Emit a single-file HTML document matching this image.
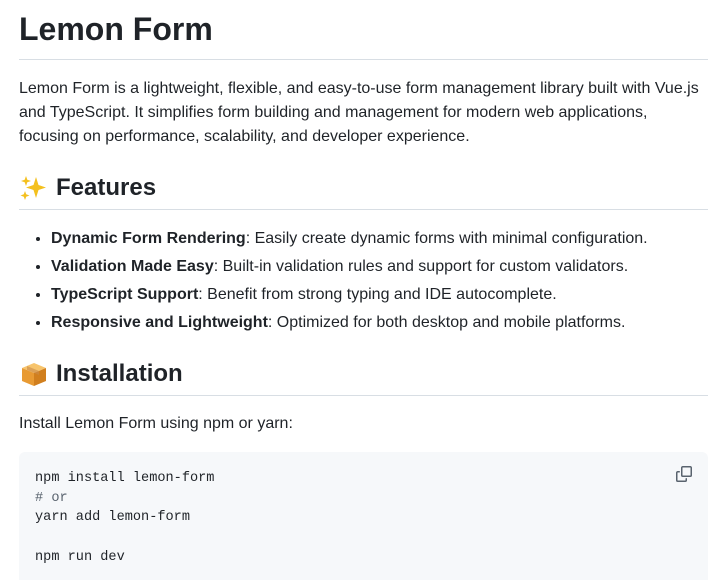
<!DOCTYPE html>
<html><head><meta charset="utf-8"><style>
body{margin:0;background:#fff;color:#1f2328;font-family:"Liberation Sans",sans-serif;font-size:16px;line-height:24px;}
.w{position:absolute;left:19px;width:689px;top:0}
h1{position:absolute;top:8px;left:0;width:689px;margin:0;font-size:32px;line-height:42px;font-weight:600;border-bottom:1px solid #d8dee4;height:51px}
p{margin:0;position:absolute;left:0;width:689px}
h2{position:absolute;left:0;width:689px;margin:0;font-size:24px;line-height:30px;font-weight:600;border-bottom:1px solid #d8dee4;display:flex;align-items:flex-start}
h2 svg{margin-right:7px;margin-top:1px}
ul{position:absolute;left:0;top:227px;margin:0;padding-left:32px;width:657px}
li{line-height:24px;margin-bottom:4px}
b{font-weight:600}
pre{position:absolute;left:0;top:452px;height:128px;margin:0;background:#f6f8fa;padding:17px 16px 16px;box-sizing:border-box;width:689px;font-family:"Liberation Mono",monospace;font-size:13.6px;line-height:19.7px;border-radius:6px 6px 0 0}
.c{color:#59636e}
</style></head><body><div class="w">
<h1>Lemon Form</h1>
<p style="top:77px">Lemon Form is a lightweight, flexible, and easy-to-use form management library built with Vue.js and TypeScript. It simplifies form building and management for modern web applications, focusing on performance, scalability, and developer experience.</p>
<h2 style="top:173px;height:36px"><svg width="30" height="28" viewBox="0 0 30 28"><path d="M17 3 L19.5 11 L27 13.5 L19.5 16 L17 24 L14.5 16 L7 13.5 L14.5 11Z" fill="#f4c01e"/><path d="M7 2 L8.3 5.7 L12 7 L8.3 8.3 L7 12 L5.7 8.3 L2 7 L5.7 5.7Z" fill="#f4c01e"/><path d="M6 17 L7.2 20.3 L10.5 21.5 L7.2 22.7 L6 26 L4.8 22.7 L1.5 21.5 L4.8 20.3Z" fill="#f4c01e"/></svg>Features</h2>
<ul>
<li><b>Dynamic Form Rendering</b>: Easily create dynamic forms with minimal configuration.</li>
<li><b>Validation Made Easy</b>: Built-in validation rules and support for custom validators.</li>
<li><b>TypeScript Support</b>: Benefit from strong typing and IDE autocomplete.</li>
<li><b>Responsive and Lightweight</b>: Optimized for both desktop and mobile platforms.</li>
</ul>
<h2 style="top:359px;height:36px"><svg width="30" height="28" viewBox="0 0 30 28"><path d="M3 8 L15 3 L27 8 L15 13Z" fill="#f7c46c"/><path d="M3 8 L15 13 L15 26 L3 21Z" fill="#e89a33"/><path d="M27 8 L15 13 L15 26 L27 21Z" fill="#d17f1e"/><path d="M8 6 L20 11 L20 15 L8 10Z" fill="#c98a4a" opacity=".6"/></svg>Installation</h2>
<p style="top:412px">Install Lemon Form using npm or yarn:</p>
<pre>npm install lemon-form
<span class="c"># or</span>
yarn add lemon-form

npm run dev</pre>
<svg style="position:absolute;left:657px;top:466px" width="16" height="16" viewBox="0 0 16 16" fill="#59636e"><path d="M0 6.75C0 5.784.784 5 1.750 5h1.5a.75.75 0 0 1 0 1.5h-1.5a.25.25 0 0 0-.25.25v7.5c0 .138.112.25.25.25h7.5a.25.25 0 0 0 .25-.25v-1.5a.75.75 0 0 1 1.5 0v1.5A1.75 1.75 0 0 1 9.25 16h-7.5A1.75 1.75 0 0 1 0 14.25Z"/><path d="M5 1.75C5 .784 5.784 0 6.75 0h7.5C15.216 0 16 .784 16 1.75v7.5A1.75 1.75 0 0 1 14.25 11h-7.5A1.75 1.75 0 0 1 5 9.25Zm1.75-.25a.25.25 0 0 0-.25.25v7.5c0 .138.112.25.25.25h7.5a.25.25 0 0 0 .25-.25v-7.5a.25.25 0 0 0-.25-.25Z"/></svg>
</div></body></html>
